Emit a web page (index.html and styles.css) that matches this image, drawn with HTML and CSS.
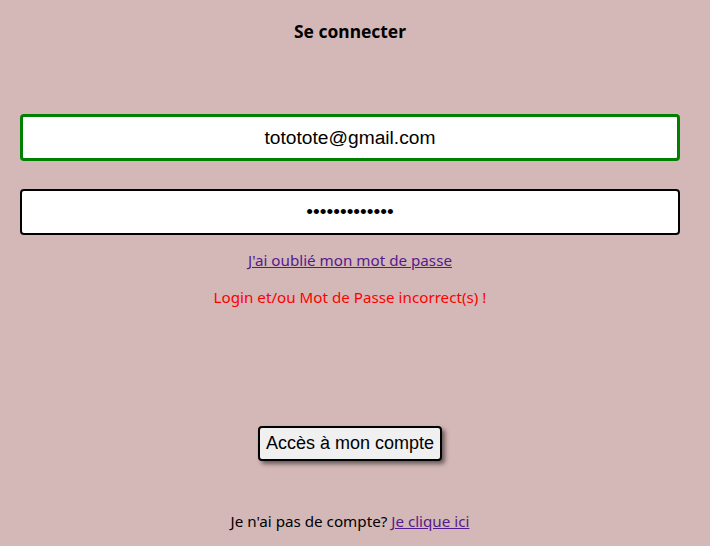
FILE: index.html
```html
<!DOCTYPE html>
<html lang="fr">
<head>
<meta charset="utf-8">
<link rel="stylesheet" href="styles.css">
</head>
<body>
<main class="page">
  <h1 class="title">Se connecter</h1>
  <form class="form">
    <input class="field field-ok" type="email" value="tototote@gmail.com">
    <input class="field" type="password" value="abcdefghijklm">
    <a class="link forgot" href="#">J'ai oublié mon mot de passe</a>
    <p class="error">Login et/ou Mot de Passe incorrect(s) !</p>
    <button class="btn" type="button">Accès à mon compte</button>
  </form>
  <p class="signup">Je n'ai pas de compte? <a class="link" href="#">Je clique ici</a></p>
</main>
</body>
</html>
```

FILE: styles.css
```css
html, body {
  margin: 0;
  padding: 0;
  background: #d4b7b7;
}
body {
  font-family: "Noto Sans", "Open Sans", sans-serif;
  font-size: 15.2px;
  color: #000;
}
.page {
  display: flex;
  flex-direction: column;
  align-items: center;
  padding: 0 30px 0 20px;
  height: 546px;
  box-sizing: border-box;
}
.title {
  margin: 19px 0 0;
  font-size: 17.4px;
  font-weight: bold;
  line-height: 24px;
}
.form {
  display: flex;
  flex-direction: column;
  align-items: center;
  width: 100%;
  margin-top: 71px;
}
.field {
  width: 100%;
  box-sizing: border-box;
  height: 47px;
  border: 2px solid #000;
  border-radius: 4px;
  background: #fff;
  font-family: "Liberation Sans", Arial, sans-serif;
  font-size: 19.2px;
  text-align: center;
  color: #000;
  outline: none;
}
.field-ok {
  border: 3px solid #008000;
}
.field + .field {
  margin-top: 28px;
  height: 46px;
}
.link {
  color: #551a8b;
}
.forgot {
  margin-top: 15px;
}
.error {
  color: #ff0000;
  margin: 17px 0 0;
}
.btn {
  margin-top: 119px;
  font-family: "Liberation Sans", Arial, sans-serif;
  font-size: 18px;
  padding: 5px 6px;
  background: #f0f0f0;
  border: 2px solid #000;
  border-radius: 4px;
  box-shadow: 3px 3px 4px rgba(0,0,0,0.5);
  color: #000;
}
.signup {
  margin: 50px 0 0;
}
```
